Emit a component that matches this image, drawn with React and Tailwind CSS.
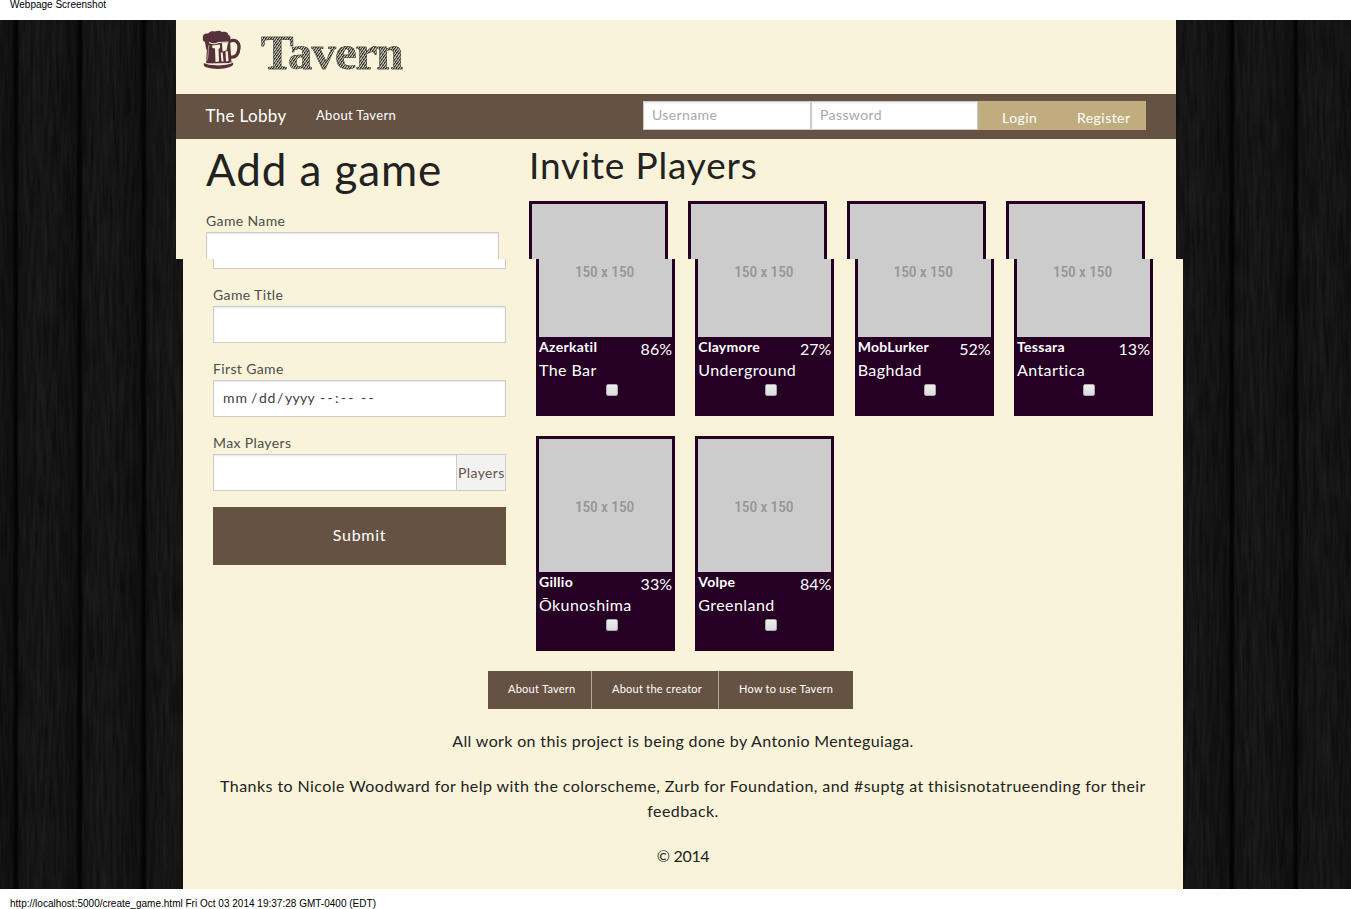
const rowOne = [
  { name: "Azerkatil", pct: "86%", city: "The Bar" },
  { name: "Claymore", pct: "27%", city: "Underground" },
  { name: "MobLurker", pct: "52%", city: "Baghdad" },
  { name: "Tessara", pct: "13%", city: "Antartica" },
];

const rowTwo = [
  { name: "Gillio", pct: "33%", city: "Ōkunoshima" },
  { name: "Volpe", pct: "84%", city: "Greenland" },
];

function Wood() {
  return (
    <svg className="absolute inset-0 h-full w-full" aria-hidden="true">
      <defs>
        <filter id="grain" x="0" y="0" width="100%" height="100%" colorInterpolationFilters="sRGB">
          <feTurbulence type="fractalNoise" baseFrequency="0.3 0.02" numOctaves="4" seed="7" />
          <feColorMatrix
            type="matrix"
            values="0.09 0 0 0 0.042  0.09 0 0 0 0.042  0.09 0 0 0 0.042  0 0 0 0 1"
          />
        </filter>
        <linearGradient id="plank" x1="0" x2="1" y1="0" y2="0">
          <stop offset="0" stopColor="#000" stopOpacity="0.15" />
          <stop offset="0.19" stopColor="#000" stopOpacity="0.3" />
          <stop offset="0.235" stopColor="#000" stopOpacity="0.8" />
          <stop offset="0.265" stopColor="#000" stopOpacity="0.8" />
          <stop offset="0.3" stopColor="#000" stopOpacity="0.1" />
          <stop offset="0.65" stopColor="#000" stopOpacity="0" />
          <stop offset="1" stopColor="#000" stopOpacity="0.15" />
        </linearGradient>
        <pattern id="planks" width="64" height="400" patternUnits="userSpaceOnUse">
          <rect width="64" height="400" fill="url(#plank)" />
        </pattern>
      </defs>
      <rect width="100%" height="100%" fill="#141414" />
      <rect width="100%" height="100%" filter="url(#grain)" />
      <rect width="100%" height="100%" fill="url(#planks)" />
    </svg>
  );
}

function Mug() {
  return (
    <svg className="h-[40px] w-[40px]" viewBox="0 0 40 40" aria-hidden="true">
      <path
        d="M1 8C0 5 3 3 6 3.500C8 1 11 1 13 1.500C16 0 19 1 20 2C23 1 26 2 26.500 5C29 6 29 9 27.500 11L6.500 12L7 18C7 20.500 4 20.500 4 18L3 12C1 11 0.500 10 1 8Z"
        fill="#56303a"
      />
      <path d="M5.500 11L28 10.500L29.500 33L4 33.500Z" fill="#56303a" />
      <path d="M2 33C8 36 25 36 31 32.500C32 35 30 36 28 37C21 39.500 11 39.500 5 37.500C2 36.500 1 35 2 33Z" fill="#56303a" />
      <path d="M3.500 33C10 35.500 23 35.500 29.500 32.500" fill="none" stroke="#f4e8cf" strokeWidth="0.8" />
      <path
        d="M27.500 11.500C33 8.500 37.500 12 37 18C36.500 24 34 28 28.500 27"
        fill="none"
        stroke="#56303a"
        strokeWidth="3.200"
      />
      <path d="M7 12.500C10 14 14 14 16.500 12.500L26.500 12" fill="none" stroke="#f9f4d9" strokeWidth="1.100" />
      <path d="M7 15C5.500 21 7 27 4.500 31" fill="none" stroke="#c7a99a" strokeWidth="0.900" />
      <path d="M10 15.500L18 14.500L18 18L16.500 19L17 31.500L13.500 32L13 18.500L10.500 18Z" fill="#f9f4d9" />
      <path d="M20 13L26 12.500L24.500 20.500L20.500 21.500Z" fill="#f9f4d9" />
      <path d="M18.700 22.500L20.700 22.500L21.500 31.500L19.500 31.500Z" fill="#f9f4d9" />
      <path d="M23.500 21.500L25.800 21L26.500 31L24 31.500Z" fill="#f9f4d9" />
    </svg>
  );
}

function Field({ label, children }) {
  return (
    <div className="mb-[15px]">
      <div className="h-[22px] text-[14px] leading-[22px] tracking-[0.37px] text-[#4d4d4d]">{label}</div>
      {children}
    </div>
  );
}

const box = "h-[37px] w-full border border-[#cccccc] bg-white shadow-[inset_0_1px_2px_rgba(0,0,0,0.1)]";

function Details({ player }) {
  return (
    <div className="h-[76px] text-white">
      <div className="flex h-[22px] items-start justify-between">
        <span className="text-[14px] font-bold leading-[19px] tracking-[0.3px]">{player.name}</span>
        <span className="text-[16px] leading-[24px]">{player.pct}</span>
      </div>
      <div className="text-[16px] leading-[22px] tracking-[0.42px]">{player.city}</div>
      <div className="ml-[66.5px] mt-[3px] h-[12px] w-[12px] rounded-[2px] border border-[#a9a9a9] bg-linear-to-b from-[#eeeeee] to-[#dcdcdc]" />
    </div>
  );
}

function Size() {
  return (
    <span className="-ml-[2px] font-['Roboto_Condensed'] text-[15.5px] font-medium leading-[19px] tracking-[-0.15px] text-[#969696]">
      150 x 150
    </span>
  );
}

export default function App() {
  return (
    <div className="flex h-[909px] w-full flex-col overflow-hidden bg-white font-['Lato',sans-serif] text-[#222222]">
      <div className="h-[20px] pl-[10px] font-['Liberation_Sans',sans-serif] text-[10px] leading-[10px] text-black">
        Webpage Screenshot
      </div>

      <div className="relative h-[869px] overflow-hidden">
        <Wood />

        <div className="relative ml-[176px] h-[239px] w-[1000px] overflow-hidden bg-[#f9f4d9]">
          <header className="flex h-[74px] pl-[26px] pt-[10px]">
            <Mug />
            <span className="ml-[19px] bg-[repeating-linear-gradient(125deg,#2a2a28_0px,#4a4a46_0.8px,#d8d4bc_1.4px,#a8a594_2.1px)] bg-clip-text font-['Liberation_Serif',serif] text-[49px] font-bold leading-[46px] tracking-[-1.1px] text-transparent [-webkit-text-stroke:0.4px_#222222]">
              Tavern
            </span>
          </header>

          <nav className="flex h-[45px] items-center bg-[#665243] pl-[30px] text-white">
            <span className="-ml-[0.5px] w-[110.5px] pb-[2px] text-[17px] leading-[43px] tracking-[0.33px]">The Lobby</span>
            <span className="pb-[3px] text-[13px] leading-[42px] tracking-[0.32px]">About Tavern</span>
            <div className="ml-auto mr-[30px] flex h-[29px] w-[503px] -translate-y-px text-[14px]">
              <div className="w-[168px] border border-[#cccccc] bg-white pl-[8px] leading-[26px] tracking-[0.38px] text-[#a9a9a9] shadow-[inset_0_1px_2px_rgba(0,0,0,0.1)]">
                Username
              </div>
              <div className="w-[167px] border border-[#cccccc] bg-white pl-[8px] leading-[26px] tracking-[0.4px] text-[#a9a9a9] shadow-[inset_0_1px_2px_rgba(0,0,0,0.1)]">
                Password
              </div>
              <div className="flex flex-1 bg-[#bfad7f] pl-[24px] leading-[34px] tracking-[0.45px]">
                <span className="w-[75px]">Login</span>
                <span>Register</span>
              </div>
            </div>
          </nav>

          <div className="flex pl-[30px]">
            <div className="w-[293px]">
              <h1 className="h-[71px] text-[44px] leading-[61px] tracking-[0.9px]">Add a game</h1>
              <Field label="Game Name">
                <div className={box} />
              </Field>
            </div>
            <div className="ml-[30px]">
              <h2 className="h-[62px] text-[37px] leading-[52px] tracking-[0.85px]">Invite Players</h2>
              <div className="flex gap-[20px]">
                {rowOne.map((p) => (
                  <div key={p.name} className="h-[100px] w-[139px] border-[3px] border-[#250024] bg-[#cccccc]" />
                ))}
              </div>
            </div>
          </div>
        </div>

        <div className="relative ml-[183px] h-[630px] w-[1000px] overflow-hidden bg-[#f9f4d9]">
          <div className="flex h-[412px] pl-[30px]">
            <form className="w-[293px]">
              <div className="mb-[15px] h-[10px] border border-t-0 border-[#cccccc] bg-white" />
              <Field label="Game Title">
                <div className={box} />
              </Field>
              <Field label="First Game">
                <div className="flex h-[37px] w-full border border-[#cccccc] bg-white pl-[9px] text-[14px] leading-[34px] text-[#404040] shadow-[inset_0_1px_2px_rgba(0,0,0,0.1)]">
                  <span className="w-[28px] tracking-[1px]">mm</span>
                  <span className="w-[8px]">/</span>
                  <span className="w-[18px] tracking-[0.6px]">dd</span>
                  <span className="w-[8px]">/</span>
                  <span className="w-[35px] tracking-[0.3px]">yyyy</span>
                  <span className="w-[41px] tracking-[2.3px]">--:--</span>
                  <span className="tracking-[2.2px]">--</span>
                </div>
              </Field>
              <Field label="Max Players">
                <div className="flex h-[37px] w-full border border-[#cccccc] bg-white text-[14px] shadow-[inset_0_1px_2px_rgba(0,0,0,0.1)]">
                  <div className="flex-1" />
                  <div className="w-[49px] border-l border-[#cccccc] bg-[#f2f2f2] pl-px leading-[36px] tracking-[0.4px] text-[#665243]">
                    Players
                  </div>
                </div>
              </Field>
              <div className="mt-[16px] h-[58px] bg-[#665243] text-center text-[16px] leading-[56px] tracking-[0.7px] text-white">
                Submit
              </div>
            </form>

            <div className="ml-[30px]">
              <div className="flex gap-[20.33px]">
                {rowOne.map((p) => (
                  <div key={p.name} className="h-[157px] w-[139px] border-[3px] border-t-0 border-[#250024] bg-[#250024]">
                    <div className="flex h-[78px] justify-center bg-[#cccccc] pt-[4px]">
                      <Size />
                    </div>
                    <Details player={p} />
                  </div>
                ))}
              </div>
              <div className="mt-[20px] flex gap-[20.33px]">
                {rowTwo.map((p) => (
                  <div key={p.name} className="h-[215px] w-[139px] border-[3px] border-[#250024] bg-[#250024]">
                    <div className="flex h-[133px] justify-center bg-[#cccccc] pt-[59px]">
                      <Size />
                    </div>
                    <Details player={p} />
                  </div>
                ))}
              </div>
            </div>
          </div>

          <footer>
            <div className="ml-[305px] flex h-[38px] w-[365px] bg-[#665243] text-[11px] leading-[36px] tracking-[0.25px] text-white">
              <span className="w-[104px] border-r border-[#b3a89f] pl-[20px]">About Tavern</span>
              <span className="w-[127px] border-r border-[#b3a89f] pl-[20px]">About the creator</span>
              <span className="pl-[20px]">How to use Tavern</span>
            </div>
            <div className="mt-[19px] flex flex-col gap-[20px] text-center text-[16px] leading-[25px]">
              <p className="tracking-[0.36px]">All work on this project is being done by Antonio Menteguiaga.</p>
              <p className="tracking-[0.43px]">
                Thanks to Nicole Woodward for help with the colorscheme, Zurb for Foundation, and #suptg at
                thisisnotatrueending for their
                <br />
                feedback.
              </p>
              <p className="tracking-[-0.3px]">© 2014</p>
            </div>
          </footer>
        </div>
      </div>

      <div className="h-[20px] pl-[10px] font-['Liberation_Sans',sans-serif] text-[10px] leading-[29px] tracking-[0.01px] text-black">
        http://localhost:5000/create_game.html Fri Oct 03 2014 19:37:28 GMT-0400 (EDT)
      </div>
    </div>
  );
}
